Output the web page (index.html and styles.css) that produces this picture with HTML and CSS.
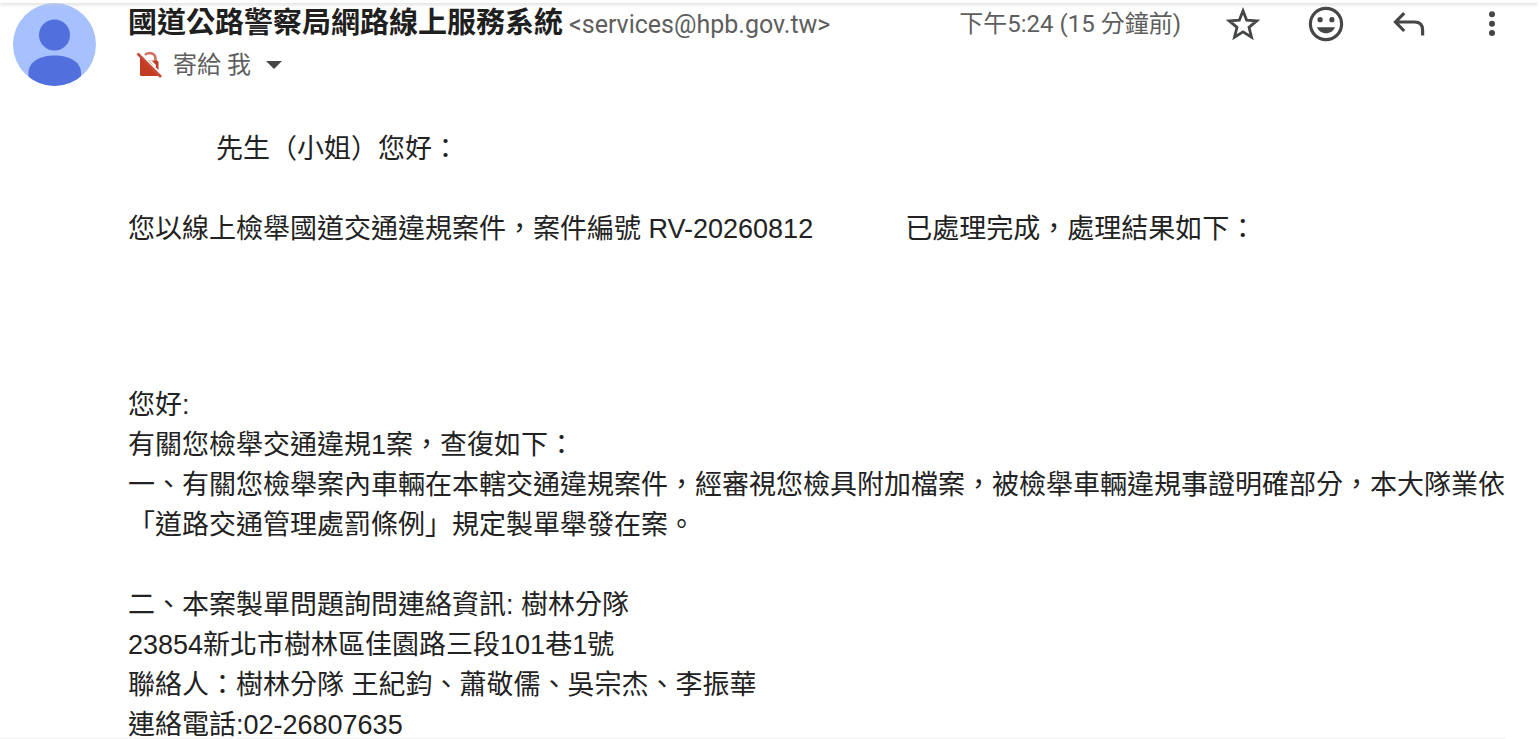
FILE: index.html
```
<!DOCTYPE html>
<html lang="zh-Hant-TW">
<head>
  <meta charset="UTF-8">
  <title>國道公路警察局網路線上服務系統</title>
  <link rel="stylesheet" href="styles.css">
</head>
<body>
  <div class="toolbar-edge"></div>
  <main class="mail">
    <svg class="avatar" viewBox="0 0 83 83" aria-hidden="true">
      <defs><clipPath id="circle"><circle cx="41.5" cy="41.5" r="41.5"/></clipPath></defs>
      <g clip-path="url(#circle)">
        <rect width="83" height="83" fill="#a6c1fe"/>
        <circle cx="41.5" cy="32" r="15.5" fill="#5170de"/>
        <path d="M15.5 90V70C15.5 58 28 52.5 41.5 52.5S68 58 68 70V90Z" fill="#5170de"/>
      </g>
    </svg>
    <article class="message">
      <header class="head">
        <div class="from">
          <h1>國道公路警察局網路線上服務系統</h1>
          <span class="email">&lt;services@hpb.gov.tw&gt;</span>
        </div>
        <time class="time">下午5:24 (15 分鐘前)</time>
        <div class="actions">
          <button aria-label="加上星號">
            <svg viewBox="0 0 36 36"><path d="M18 4.8L21.7 14.2L31.7 14.9L24 21.3L26.5 31.2L18 25.8L9.5 31.2L12 21.3L4.3 14.9L14.3 14.2Z" fill="none" stroke="#444746" stroke-width="2.8"/></svg>
          </button>
          <button aria-label="新增表情符號回應">
            <svg viewBox="0 0 36 36"><circle cx="18" cy="18" r="15.6" fill="none" stroke="#444746" stroke-width="3.2"/><circle cx="12.1" cy="13.7" r="2.6" fill="#444746"/><circle cx="23.9" cy="13.7" r="2.6" fill="#444746"/><path d="M9 21.3H27C25.5 25 22.2 27.3 18 27.3S10.5 25 9 21.3Z" fill="#444746"/></svg>
          </button>
          <button aria-label="回覆">
            <svg viewBox="0 0 36 36"><path d="M13.2 7.2L4.5 16L13.2 25M5 16H23.5Q31.6 16 31.6 24V29.5" fill="none" stroke="#444746" stroke-width="3.2"/></svg>
          </button>
          <button aria-label="更多">
            <svg viewBox="0 0 36 36" fill="#444746"><circle cx="18" cy="8.3" r="3"/><circle cx="18" cy="17.8" r="3"/><circle cx="18" cy="27.1" r="3"/></svg>
          </button>
        </div>
      </header>
      <div class="to">
        <svg class="lock" viewBox="0 0 26 28" aria-hidden="true">
          <path d="M9 4Q10.5 2 14 2Q19.5 2.5 19.5 8V10" fill="none" stroke="#d0705e" stroke-width="2.6"/>
          <path d="M4 6L23 25H5.5Q4 25 4 23.5Z" fill="#c23b22"/>
          <path d="M12 9.5H20.5Q22.5 9.500 22.5 11.5V19Z" fill="#c23b22"/>
          <path d="M12.5 9.5H15.5L20 14V17Z" fill="#fff"/>
          <path d="M1.5 2.5L25 26" stroke="#c94a34" stroke-width="2.6"/>
        </svg>
        <span>寄給 我</span>
        <button class="details" aria-label="顯示詳細資料">
          <svg viewBox="0 0 16 8"><path d="M0 0H16L8 8Z" fill="#444746"/></svg>
        </button>
      </div>
      <div class="content">
        <p class="name">先生（小姐）您好：</p>
        <p>您以線上檢舉國道交通違規案件，案件編號 RV-20260812<span class="blank"></span>已處理完成，處理結果如下：</p>
        <p class="reply">您好:<br>
          有關您檢舉交通違規1案，查復如下：<br>
          一、有關您檢舉案內車輛在本轄交通違規案件，經審視您檢具附加檔案，被檢舉車輛違規事證明確部分，本大隊業依「道路交通管理處罰條例」規定製單舉發在案。</p>
        <p>二、本案製單問題詢問連絡資訊: 樹林分隊<br>
          23854新北市樹林區佳園路三段101巷1號<br>
          聯絡人：樹林分隊 王紀鈞、蕭敬儒、吳宗杰、李振華<br>
          連絡電話:02-26807635</p>
      </div>
    </article>
  </main>
  <div class="bottom-edge"></div>
</body>
</html>
```
FILE: styles.css
```
* { box-sizing: border-box; }
body { margin: 0; height: 100vh; display: flex; flex-direction: column; overflow: hidden; background: #fff; color: #222; font-family: "Liberation Sans", "Noto Sans CJK TC", sans-serif; }
button { padding: 0; border: none; background: none; cursor: pointer; }
svg { display: block; }

.toolbar-edge { flex: none; height: 3px; margin-right: 2px; box-shadow: 0 1px 4px #ccc; clip-path: inset(0 0 -6px 0); }
.bottom-edge { flex: none; height: 1px; margin-right: 34px; background: #f4f4f4; box-shadow: 0 0 2px #eee; }

.mail { flex: 1; min-height: 0; display: flex; align-items: flex-start; gap: 32px; padding: 0 30px 0 13px; }
.avatar { flex: none; width: 83px; height: 83px; }
.message { flex: 1; min-width: 0; }

.head { display: flex; align-items: center; height: 41px; color: #5e5e5e; font-family: Roboto, "Noto Sans CJK TC", sans-serif; font-size: 24px; line-height: 40px; white-space: nowrap; }
.from { flex: 1; display: flex; align-items: baseline; gap: 6px; }
h1 { margin: 0; font-size: 29px; line-height: 40px; font-weight: bold; color: #1f1f1f; }
.email { font-size: 25px; }
.actions { display: flex; gap: 47px; margin: 0 0 0 44px; }
.actions svg { width: 36px; height: 36px; }

.to { display: flex; align-items: center; height: 42px; padding-left: 8px; color: #5e5e5e; font-family: Roboto, "Noto Sans CJK TC", sans-serif; font-size: 24px; line-height: 40px; }
.lock { width: 26px; height: 28px; margin-right: 11px; }
.details { margin-left: 15px; }
.details svg { width: 16px; height: 8px; }

.content { margin-top: 43px; font-size: 27px; line-height: 40px; }
.content p { margin: 0 0 40px; }
.content .name { padding-left: 88px; }
.content .reply { margin-top: 136px; }
.blank { display: inline-block; width: 92px; }
```
